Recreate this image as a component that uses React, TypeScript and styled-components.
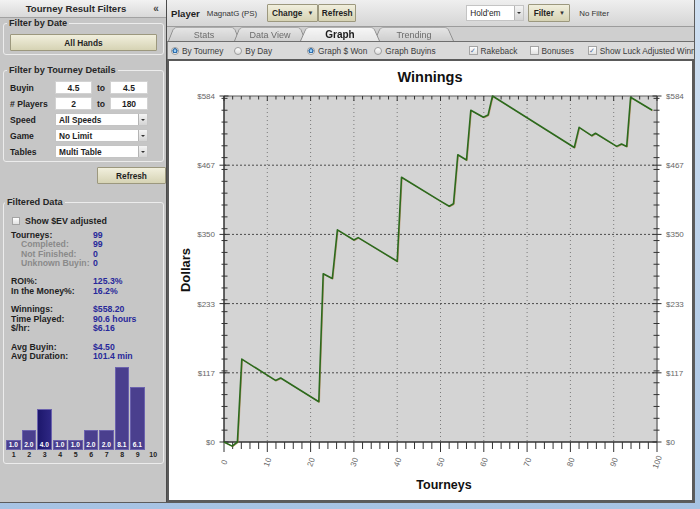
import React from "react";
import styled, { createGlobalStyle } from "styled-components";

const GlobalStyle = createGlobalStyle`
  html, body {
    margin: 0;
    padding: 0;
  }
  body {
    width: 700px;
    height: 509px;
    overflow: hidden;
    background: linear-gradient(#cfe0f2, #a7c3e3);
    font-family: "Liberation Sans", Arial, sans-serif;
  }
  * {
    box-sizing: border-box;
  }
`;

const Frame = styled.div`
  display: flex;
  width: 695px;
  height: 503px;
  border-right: 1px solid #5c5c5c;
  border-bottom: 1px solid #5c5c5c;
  background: #c6c6c6;
  overflow: hidden;
`;

/* ---------- sidebar ---------- */

const Sidebar = styled.aside`
  width: 167px;
  flex: none;
  display: flex;
  flex-direction: column;
  border-right: 1px solid #4a4a4a;
  background: #c6c6c6;
  color: #1e1e1e;
`;

const SideHeader = styled.div`
  height: 18px;
  flex: none;
  display: grid;
  grid-template-columns: 1fr 20px;
  align-items: center;
  border-bottom: 1px solid #a2a2a2;
  background: linear-gradient(#f2f2f2, #d9d9d9);
  font-size: 9.6px;
  font-weight: 700;
  color: #2a2a2a;
`;

const HeaderTitle = styled.span`
  text-align: center;
  padding-left: 6px;
`;

const Collapse = styled.span`
  text-align: center;
  font-size: 10px;
  color: #444;
`;

const Group = styled.fieldset<{ $mt: number; $px?: number }>`
  margin: ${(p) => p.$mt}px 2px 0 3px;
  padding: 0 ${(p) => p.$px ?? 6}px 3px;
  border: 1px solid #ececec;
  border-radius: 3px;
  min-width: 0;
`;

const Legend = styled.legend<{ $shift?: number }>`
  margin-left: ${(p) => p.$shift ?? -3}px;
  padding: 0 2px;
  font-size: 9.2px;
  line-height: 11px;
  font-weight: 700;
  color: #262626;
`;

const BeigeButton = styled.button<{ $w?: number; $h?: number }>`
  width: ${(p) => (p.$w ? `${p.$w}px` : "100%")};
  height: ${(p) => p.$h ?? 17}px;
  padding: 0;
  border: 1px solid #9c987e;
  border-radius: 1px;
  background: linear-gradient(#f1efdd, #d6d3b4);
  font-family: inherit;
  font-size: 8.3px;
  font-weight: 700;
  color: #1f1f1f;
  display: flex;
  align-items: center;
  justify-content: center;
  gap: 5px;
`;

const DateButton = styled(BeigeButton)`
  margin-top: 5px;
`;

const FormGrid = styled.div`
  margin-top: 5px;
  display: grid;
  grid-template-columns: 45px 37px 18px 38px;
  grid-auto-rows: 13px;
  row-gap: 3px;
  align-items: center;
  font-size: 8.6px;
  font-weight: 700;
`;

const To = styled.span`
  text-align: center;
  font-size: 8.6px;
`;

const NumInput = styled.div`
  height: 13px;
  background: #fff;
  border: 1px solid #d2d2d2;
  display: flex;
  align-items: center;
  justify-content: center;
  font-size: 8.5px;
  font-weight: 700;
`;

const Select = styled.div<{ $span?: boolean; $w?: number; $bold?: boolean }>`
  grid-column: ${(p) => (p.$span ? "2 / 5" : "auto")};
  width: ${(p) => (p.$w ? `${p.$w}px` : "auto")};
  height: 100%;
  display: flex;
  align-items: center;
  justify-content: space-between;
  background: #fff;
  border: 1px solid #c4c4c4;
  padding-left: 3px;
  font-size: 8.3px;
  font-weight: ${(p) => (p.$bold ? 700 : 400)};
  color: #1e1e1e;
`;

const DropArrow = styled.span`
  width: 9px;
  height: 100%;
  flex: none;
  display: flex;
  align-items: center;
  justify-content: center;
  border-left: 1px solid #b4b4b4;
  background: linear-gradient(#f4f4f4, #d4d4d4);
  &::after {
    content: "";
    border-left: 2px solid transparent;
    border-right: 2px solid transparent;
    border-top: 2px solid #333;
  }
`;

const RefreshRow = styled.div`
  margin-top: 5px;
  display: flex;
  justify-content: flex-end;
`;

const CheckRow = styled.label`
  margin: 8px 0 0 6px;
  height: 10px;
  display: flex;
  align-items: center;
  gap: 5px;
  font-size: 8.9px;
  font-weight: 700;
`;

const Box = styled.span<{ $checked?: boolean; $size?: number }>`
  width: ${(p) => p.$size ?? 8}px;
  height: ${(p) => p.$size ?? 8}px;
  flex: none;
  border: 1px solid #a4a4a4;
  background: linear-gradient(#ffffff, #e2e2e2);
  display: flex;
  align-items: center;
  justify-content: center;
  font-size: 7px;
  line-height: 1;
  color: #4f6f9a;
`;

const Stats = styled.div`
  margin-top: 5px;
  padding-left: 5px;
  display: grid;
  grid-template-columns: 82px auto;
  grid-auto-rows: 9.3px;
  font-size: 8.7px;
  line-height: 9.3px;
  font-weight: 700;
  white-space: nowrap;
`;

const StatLabel = styled.span<{ $sub?: boolean }>`
  padding-left: ${(p) => (p.$sub ? 10 : 0)}px;
  color: ${(p) => (p.$sub ? "#8a8a8a" : "#1e1e1e")};
`;

const StatValue = styled.span`
  color: #28289a;
`;

const StatGap = styled.span`
  grid-column: 1 / 3;
`;

const Histogram = styled.div`
  margin-top: 6px;
  display: grid;
  grid-template-columns: repeat(10, 15.5px);
  grid-template-rows: 83px 10px;
`;

const BarSlot = styled.div`
  display: flex;
  align-items: flex-end;
  padding-right: 1px;
`;

const Bar = styled.div<{ $dark?: boolean }>`
  width: 100%;
  display: flex;
  align-items: flex-end;
  justify-content: center;
  padding-bottom: 1px;
  border: 1px solid #6b62ad;
  background: ${(p) =>
    p.$dark ? "linear-gradient(90deg, #1d176c, #2e2784)" : "#4a3f8e"};
  color: #fff;
  font-size: 6.6px;
  font-weight: 700;
  line-height: 7px;
`;

const BarLabel = styled.span`
  text-align: center;
  font-size: 7px;
  font-weight: 700;
  line-height: 10px;
  color: #222;
`;

/* ---------- main ---------- */

const Main = styled.main`
  flex: 1;
  min-width: 0;
  display: flex;
  flex-direction: column;
  background: #cdcdcd;
`;

const Toolbar = styled.div`
  height: 27px;
  flex: none;
  display: flex;
  align-items: center;
  padding-left: 4px;
  border-bottom: 1px solid #9c9c9c;
  background: linear-gradient(#efefef, #d5d5d5);
  white-space: nowrap;
`;

const ToolLabel = styled.span`
  font-size: 9.6px;
  font-weight: 700;
  color: #1e1e1e;
`;

const ToolText = styled.span<{ $ml: number }>`
  margin-left: ${(p) => p.$ml}px;
  font-size: 7.9px;
  color: #333;
`;

const ToolSpot = styled.div<{ $ml: number }>`
  margin-left: ${(p) => p.$ml}px;
  display: flex;
`;

const Caret = styled.span`
  font-size: 6px;
  color: #333;
`;

const TabBar = styled.div`
  height: 14px;
  flex: none;
  display: flex;
  align-items: flex-end;
  padding-left: 1px;
  background: #cfcfcf;
`;

const Tab = styled.div<{ $active?: boolean; $w: number }>`
  position: relative;
  z-index: ${(p) => (p.$active ? 3 : 1)};
  width: ${(p) => p.$w}px;
  height: 14px;
  margin-right: -6px;
  display: flex;
  align-items: center;
  justify-content: center;
  padding-top: 1px;
  font-size: ${(p) => (p.$active ? 10 : 9)}px;
  font-weight: ${(p) => (p.$active ? 700 : 400)};
  color: ${(p) => (p.$active ? "#1c1c1c" : "#6c6c6c")};
  &::before {
    content: "";
    position: absolute;
    left: 0;
    right: 0;
    bottom: 0;
    top: -3px;
    z-index: -1;
    border: 1px solid #8a8a8a;
    border-bottom: none;
    border-radius: 5px 5px 0 0;
    background: ${(p) =>
      p.$active
        ? "linear-gradient(#f7f7f7, #e6e6e6)"
        : "linear-gradient(#e6e6e6, #cfcfcf)"};
    transform: perspective(14px) rotateX(9deg);
    transform-origin: bottom;
  }
`;

const OptionsBar = styled.div`
  height: 18px;
  flex: none;
  display: flex;
  align-items: center;
  padding-left: 3px;
  border-top: 1px solid #6e6e6e;
  border-left: 1px solid #8a8a8a;
  background: #dadada;
  overflow: hidden;
  white-space: nowrap;
  font-size: 8.3px;
  color: #3a3a3a;
`;

const Option = styled.label<{ $ml?: number }>`
  flex: none;
  display: flex;
  align-items: center;
  gap: 3px;
  margin-left: ${(p) => p.$ml ?? 0}px;
`;

const Radio = styled.span<{ $on?: boolean }>`
  width: 8px;
  height: 8px;
  flex: none;
  border-radius: 50%;
  border: 1px solid #9c9c9c;
  background: ${(p) =>
    p.$on
      ? "radial-gradient(circle at 50% 45%, #9fd0f5 0 1px, #2f6fae 1.6px 2.4px, #f2f2f2 2.8px)"
      : "linear-gradient(#ffffff, #dddddd)"};
`;

const ChartPanel = styled.div`
  flex: 1;
  min-height: 0;
  border: 2px solid #5a5a5a;
  background: #fff;
  overflow: hidden;
`;

/* ---------- data ---------- */

type Stat = { label: string; value: string; sub?: boolean } | null;

const stats: Stat[] = [
  { label: "Tourneys:", value: "99" },
  { label: "Completed:", value: "99", sub: true },
  { label: "Not Finished:", value: "0", sub: true },
  { label: "Unknown  Buyin:", value: "0", sub: true },
  null,
  { label: "ROI%:", value: "125.3%" },
  { label: "In the Money%:", value: "16.2%" },
  null,
  { label: "Winnings:", value: "$558.20" },
  { label: "Time Played:", value: "90.6 hours" },
  { label: "$/hr:", value: "$6.16" },
  null,
  { label: "Avg Buyin:", value: "$4.50" },
  { label: "Avg Duration:", value: "101.4 min" },
];

const finishes: (number | null)[] = [1.0, 2.0, 4.0, 1.0, 1.0, 2.0, 2.0, 8.1, 6.1, null];

const points: [number, number][] = [
  [0, 0], [1.9, -7], [3.1, 0], [4.1, 140], [11.9, 104], [13.1, 108],
  [21.9, 68], [22.9, 284], [25, 276], [26.2, 358], [30, 341], [31, 345],
  [40, 305], [41, 447], [49.9, 407], [52, 398], [53, 402], [54, 485],
  [56, 476], [57, 560], [59.9, 548], [61, 552], [62, 584], [80.9, 497],
  [82, 531], [84.9, 517], [85.8, 521], [90.7, 499], [91.8, 503], [93, 499],
  [93.9, 582], [98.9, 560],
];

const plotL = 224;
const plotR = 657;
const plotT = 96;
const plotB = 442;
const X = (t: number) => plotL + (t * (plotR - plotL)) / 100;
const Y = (v: number) => plotB - (v * (plotB - plotT)) / 584;

const yMajor = [0, 116.8, 233.6, 350.4, 467.2, 584];
const yLabels = ["$0", "$117", "$233", "$350", "$467", "$584"];
const yMinor = Array.from({ length: 29 }, (_, i) => (i + 1) * 20);
const xTicks = Array.from({ length: 51 }, (_, i) => i * 2);
const xLabels = Array.from({ length: 11 }, (_, i) => i * 10);

const FONT = "Liberation Sans, Arial, sans-serif";

function WinningsChart() {
  const line = points.map(([t, v]) => `${X(t).toFixed(1)},${Y(v).toFixed(1)}`).join(" ");
  return (
    <svg width={523} height={439} viewBox="169 61 523 439" style={{ display: "block" }}>
      <text x={430} y={82} textAnchor="middle" fontSize={14.5} fontWeight={700} fill="#111" fontFamily={FONT}>
        Winnings
      </text>
      <rect x={plotL} y={plotT} width={plotR - plotL} height={plotB - plotT} fill="#d4d4d4" />

      {xLabels.slice(1, 10).map((t) => (
        <line key={`vg${t}`} x1={X(t)} x2={X(t)} y1={plotT} y2={plotB} stroke="#7a7a7a" strokeWidth={1} strokeDasharray="1 3" />
      ))}
      {yMajor.slice(1, 5).map((v) => (
        <line key={`hg${v}`} x1={plotL} x2={plotR} y1={Y(v)} y2={Y(v)} stroke="#4a4a4a" strokeWidth={1} strokeDasharray="2 2" />
      ))}

      <line x1={plotL} x2={plotR} y1={plotT} y2={plotT} stroke="#5a5a5a" strokeWidth={1} />
      <line x1={plotL} x2={plotL} y1={plotT} y2={plotB} stroke="#333" strokeWidth={1.5} />
      <line x1={plotR} x2={plotR} y1={plotT} y2={plotB} stroke="#7a7a7a" strokeWidth={1.6} />
      <line x1={plotL} x2={plotR} y1={plotB} y2={plotB} stroke="#333" strokeWidth={1.5} />

      {yMinor.map((v) => (
        <g key={`ym${v}`} stroke="#333" strokeWidth={1}>
          <line x1={plotL - 2.5} x2={plotL + 3.5} y1={Y(v)} y2={Y(v)} />
          <line x1={plotR - 3.5} x2={plotR + 2.5} y1={Y(v)} y2={Y(v)} />
        </g>
      ))}
      {yMajor.map((v, i) => (
        <g key={`yM${v}`}>
          <line x1={plotL - 4.5} x2={plotL + 4.5} y1={Y(v)} y2={Y(v)} stroke="#333" strokeWidth={1} />
          <line x1={plotR - 4.5} x2={plotR + 4.5} y1={Y(v)} y2={Y(v)} stroke="#333" strokeWidth={1} />
          <text x={215} y={Y(v) + 3} textAnchor="end" fontSize={8} fill="#666" fontFamily={FONT}>
            {yLabels[i]}
          </text>
          <text x={666} y={Y(v) + 3} fontSize={8} fill="#666" fontFamily={FONT}>
            {yLabels[i]}
          </text>
        </g>
      ))}

      {xTicks.map((t) => (
        <g key={`xt${t}`} stroke="#333" strokeWidth={1}>
          <line x1={X(t)} x2={X(t)} y1={plotB} y2={plotB + (t % 10 === 0 ? 10 : 7)} />
          <line x1={X(t)} x2={X(t)} y1={plotT} y2={plotT + (t % 10 === 0 ? 5 : 3.5)} />
        </g>
      ))}
      {xLabels.map((t) => (
        <text
          key={`xl${t}`}
          x={X(t)}
          y={465}
          textAnchor="middle"
          fontSize={8}
          fill="#666"
          fontFamily={FONT}
          transform={`rotate(-70 ${X(t)} 462)`}
        >
          {t}
        </text>
      ))}

      <polyline points={line} fill="none" stroke="#b9733a" strokeWidth={1} opacity={0.6} transform="translate(0.7 0.7)" />
      <polyline points={line} fill="none" stroke="#2c6a1d" strokeWidth={1.6} strokeLinejoin="round" />

      <text x={190} y={270} textAnchor="middle" fontSize={13} fontWeight={700} fill="#111" fontFamily={FONT} transform="rotate(-90 190 270)">
        Dollars
      </text>
      <text x={444} y={489} textAnchor="middle" fontSize={12.5} fontWeight={700} fill="#111" fontFamily={FONT}>
        Tourneys
      </text>
    </svg>
  );
}

function FilterSidebar() {
  const maxH = 83 / 8.1;
  return (
    <Sidebar>
      <SideHeader>
        <HeaderTitle>Tourney Result Filters</HeaderTitle>
        <Collapse>«</Collapse>
      </SideHeader>

      <Group $mt={0}>
        <Legend>Filter by Date</Legend>
        <DateButton>All Hands</DateButton>
      </Group>

      <Group $mt={10} $px={6}>
        <Legend>Filter by Tourney Details</Legend>
        <FormGrid>
          <span>Buyin</span>
          <NumInput>4.5</NumInput>
          <To>to</To>
          <NumInput>4.5</NumInput>

          <span># Players</span>
          <NumInput>2</NumInput>
          <To>to</To>
          <NumInput>180</NumInput>

          <span>Speed</span>
          <Select $span $bold>
            All Speeds
            <DropArrow />
          </Select>

          <span>Game</span>
          <Select $span $bold>
            No Limit
            <DropArrow />
          </Select>

          <span>Tables</span>
          <Select $span $bold>
            Multi Table
            <DropArrow />
          </Select>
        </FormGrid>
      </Group>

      <RefreshRow>
        <BeigeButton $w={69}>Refresh</BeigeButton>
      </RefreshRow>

      <Group $mt={13} $px={2}>
        <Legend $shift={-1}>Filtered Data</Legend>
        <CheckRow>
          <Box />
          Show $EV adjusted
        </CheckRow>
        <Stats>
          {stats.map((s, i) =>
            s ? (
              <React.Fragment key={i}>
                <StatLabel $sub={s.sub}>{s.label}</StatLabel>
                <StatValue>{s.value}</StatValue>
              </React.Fragment>
            ) : (
              <StatGap key={i} />
            )
          )}
        </Stats>
        <Histogram>
          {finishes.map((f, i) => (
            <BarSlot key={`b${i}`}>
              {f !== null && (
                <Bar $dark={i === 2} style={{ height: `${Math.round(f * maxH)}px` }}>
                  {f.toFixed(1)}
                </Bar>
              )}
            </BarSlot>
          ))}
          {finishes.map((_, i) => (
            <BarLabel key={`l${i}`}>{i + 1}</BarLabel>
          ))}
        </Histogram>
      </Group>
    </Sidebar>
  );
}

export default function App() {
  return (
    <>
      <GlobalStyle />
      <Frame>
        <FilterSidebar />
        <Main>
          <Toolbar>
            <ToolLabel>Player</ToolLabel>
            <ToolText $ml={7}>MagnatG (PS)</ToolText>
            <ToolSpot $ml={10}>
              <BeigeButton $w={51} $h={18}>
                Change <Caret>▼</Caret>
              </BeigeButton>
              <BeigeButton $w={38} $h={18}>
                Refresh
              </BeigeButton>
            </ToolSpot>
            <ToolSpot $ml={110}>
              <Select $w={58} style={{ height: 16 }}>
                Hold'em
                <DropArrow />
              </Select>
            </ToolSpot>
            <ToolSpot $ml={4}>
              <BeigeButton $w={42} $h={18}>
                Filter <Caret>▼</Caret>
              </BeigeButton>
            </ToolSpot>
            <ToolText $ml={9}>No Filter</ToolText>
          </Toolbar>

          <TabBar>
            <Tab $w={72}>Stats</Tab>
            <Tab $w={72}>Data View</Tab>
            <Tab $w={80} $active>
              Graph
            </Tab>
            <Tab $w={80}>Trending</Tab>
          </TabBar>

          <OptionsBar>
            <Option>
              <Radio $on />
              By Tourney
            </Option>
            <Option $ml={11}>
              <Radio />
              By Day
            </Option>
            <Option $ml={35}>
              <Radio $on />
              Graph $ Won
            </Option>
            <Option $ml={7}>
              <Radio />
              Graph Buyins
            </Option>
            <Option $ml={33}>
              <Box $size={9}>✓</Box>
              Rakeback
            </Option>
            <Option $ml={12}>
              <Box $size={9} />
              Bonuses
            </Option>
            <Option $ml={14}>
              <Box $size={9}>✓</Box>
              Show Luck Adjusted Winnings
            </Option>
          </OptionsBar>

          <ChartPanel>
            <WinningsChart />
          </ChartPanel>
        </Main>
      </Frame>
    </>
  );
}
